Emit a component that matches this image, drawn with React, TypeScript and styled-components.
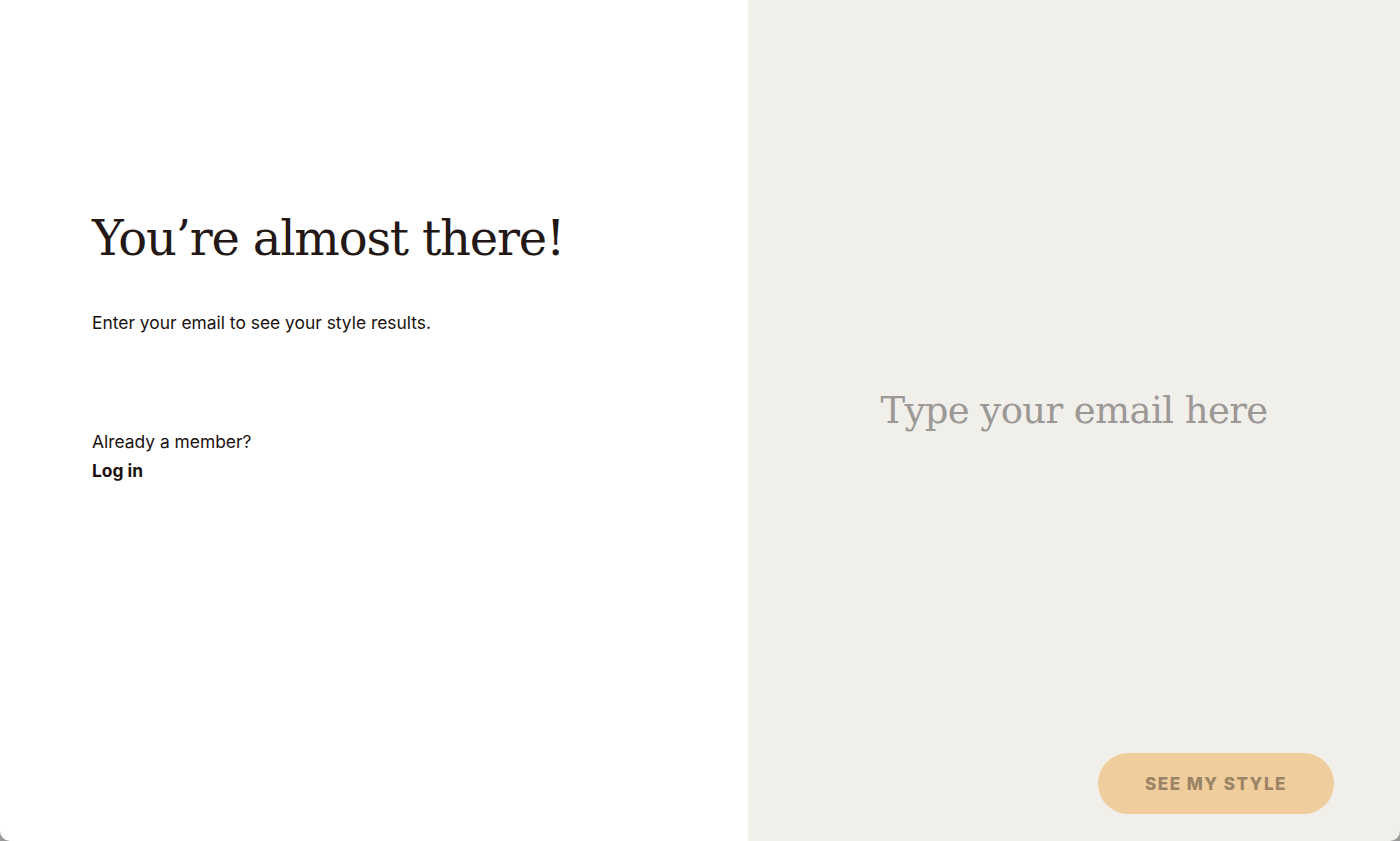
import React, { useState } from "react";
import styled, { createGlobalStyle } from "styled-components";

const GlobalStyle = createGlobalStyle`
  html, body {
    margin: 0;
    padding: 0;
    height: 100%;
    background: #9a9a9a;
  }
  #root {
    height: 100%;
  }
  * {
    box-sizing: border-box;
  }
`;

const Page = styled.div`
  display: flex;
  height: 100vh;
  border-radius: 0 0 10px 10px;
  overflow: hidden;
`;

const IntroPanel = styled.section`
  width: 748px;
  flex-shrink: 0;
  background: #ffffff;
  display: flex;
  flex-direction: column;
  padding: 206px 92px 0;
`;

const Heading = styled.h1`
  margin: 0;
  font-family: "DejaVu Serif", "Liberation Serif", serif;
  font-weight: 400;
  font-size: 48px;
  line-height: 64px;
  letter-spacing: -1.2px;
  color: #231815;
`;

const Lead = styled.p`
  margin: 41px 0 0;
  font-family: "Inter", "Liberation Sans", sans-serif;
  font-size: 17.4px;
  line-height: 24px;
  color: #1b1210;
`;

const MemberBlock = styled.div`
  margin-top: 95px;
  display: flex;
  flex-direction: column;
  gap: 5px;
  font-family: "Inter", "Liberation Sans", sans-serif;
  font-size: 17.4px;
  line-height: 24px;
  color: #1b1210;
`;

const LoginLink = styled.a`
  font-weight: 700;
  color: #1b1210;
  text-decoration: none;
  cursor: pointer;
`;

const FormPanel = styled.section`
  flex: 1;
  background: #f1efea;
  display: flex;
  flex-direction: column;
  padding: 0 66px 27px;
`;

const InputArea = styled.div`
  flex: 1;
  display: flex;
  align-items: center;
  justify-content: center;
  padding-top: 68px;
`;

const EmailInput = styled.input`
  width: 100%;
  border: none;
  outline: none;
  background: transparent;
  text-align: center;
  font-family: "DejaVu Serif", "Liberation Serif", serif;
  font-size: 37px;
  letter-spacing: -0.6px;
  color: #231815;

  &::placeholder {
    color: #9b9895;
  }
`;

const Actions = styled.div`
  display: flex;
  justify-content: flex-end;
`;

const SubmitButton = styled.button`
  width: 236px;
  height: 61px;
  border: none;
  border-radius: 31px;
  background: #efcd9c;
  color: #9a8466;
  font-family: "Inter", "Liberation Sans", sans-serif;
  font-weight: 800;
  font-size: 17px;
  letter-spacing: 1.5px;
  text-transform: uppercase;
  cursor: pointer;
`;

export default function App() {
  const [email, setEmail] = useState("");

  return (
    <>
      <GlobalStyle />
      <Page>
        <IntroPanel>
          <Heading>You’re almost there!</Heading>
          <Lead>Enter your email to see your style results.</Lead>
          <MemberBlock>
            <span>Already a member?</span>
            <LoginLink>Log in</LoginLink>
          </MemberBlock>
        </IntroPanel>
        <FormPanel>
          <InputArea>
            <EmailInput
              type="email"
              placeholder="Type your email here"
              value={email}
              onChange={(e) => setEmail(e.target.value)}
            />
          </InputArea>
          <Actions>
            <SubmitButton disabled={!email}>See my style</SubmitButton>
          </Actions>
        </FormPanel>
      </Page>
    </>
  );
}
